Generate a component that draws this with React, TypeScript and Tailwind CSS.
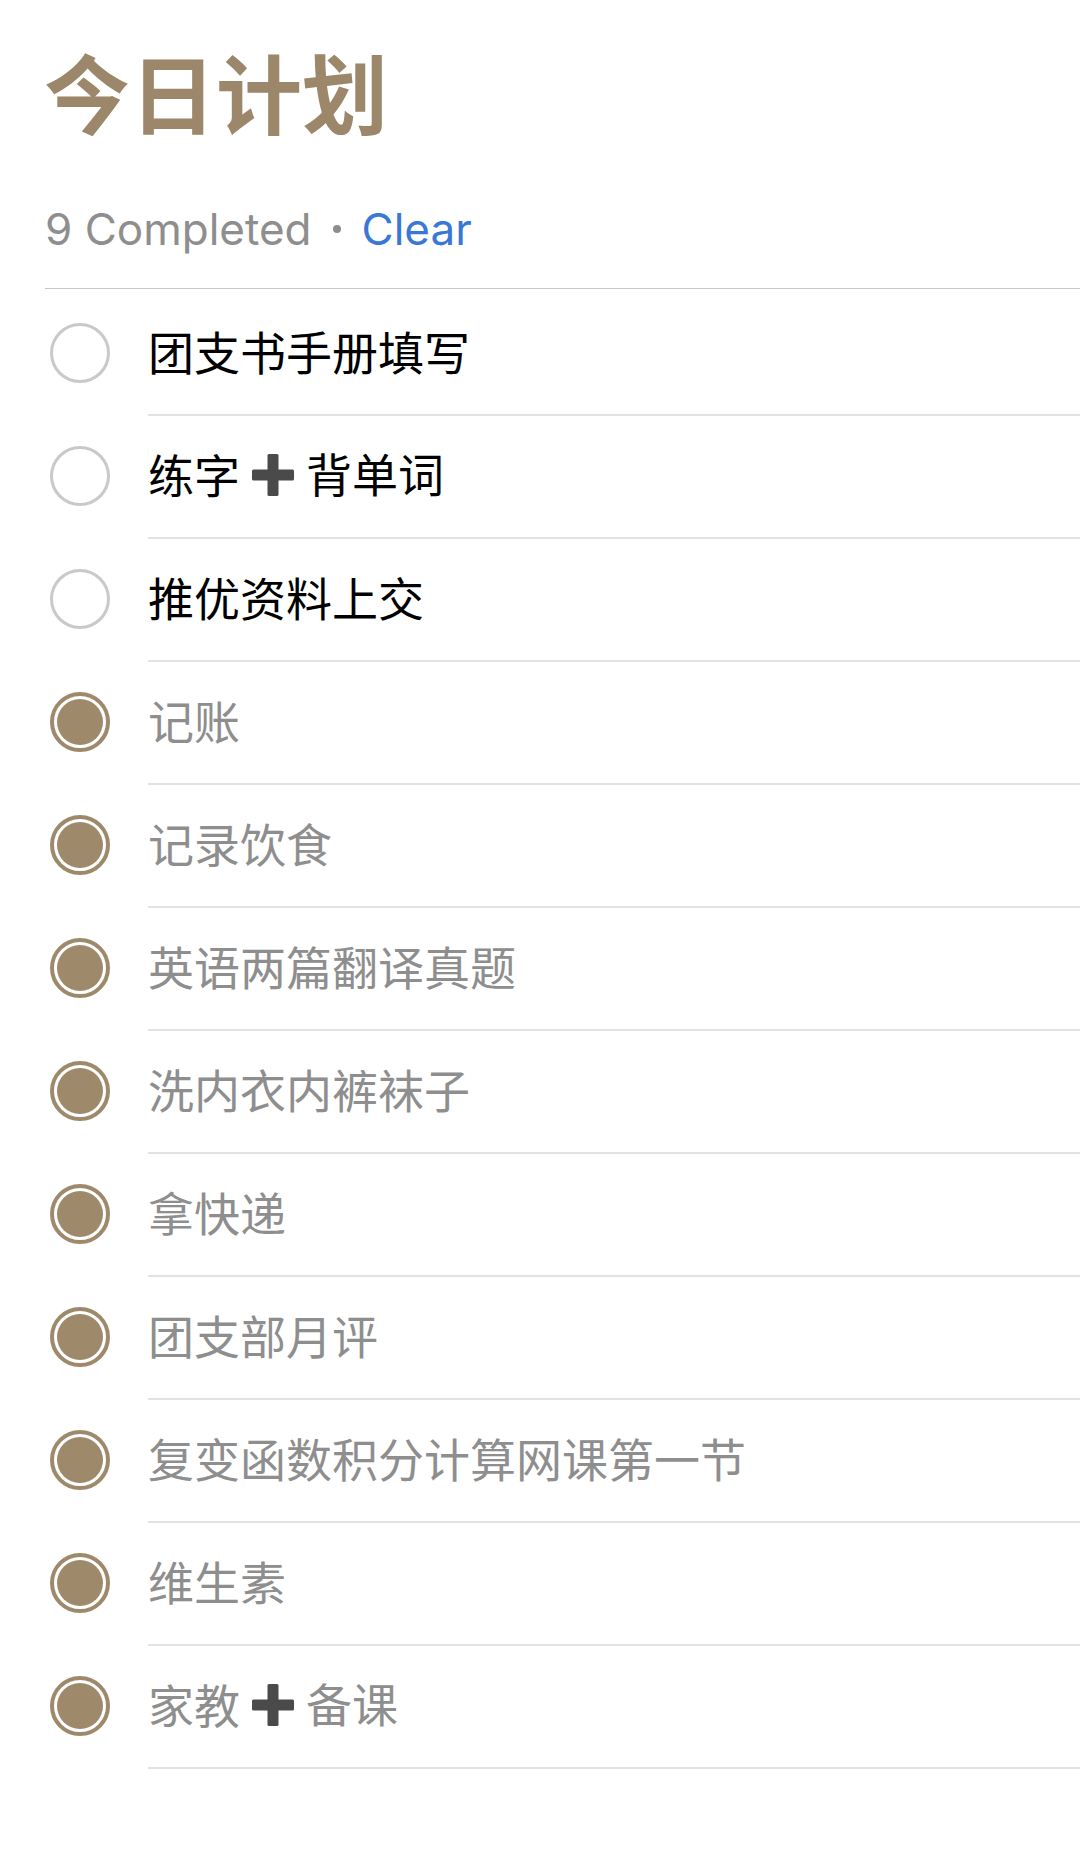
type Task = { title: string; done: boolean };

const tasks: Task[] = [
  { title: "团支书手册填写", done: false },
  { title: "练字➕背单词", done: false },
  { title: "推优资料上交", done: false },
  { title: "记账", done: true },
  { title: "记录饮食", done: true },
  { title: "英语两篇翻译真题", done: true },
  { title: "洗内衣内裤袜子", done: true },
  { title: "拿快递", done: true },
  { title: "团支部月评", done: true },
  { title: "复变函数积分计算网课第一节", done: true },
  { title: "维生素", done: true },
  { title: "家教➕备课", done: true },
];

function Plus() {
  return (
    <svg viewBox="0 0 42 42" className="inline-block w-[42px] h-[42px] mx-[12px] align-[-4px]">
      <rect x="15.5" y="0" width="11" height="42" rx="1.5" fill="#4a4a4a" />
      <rect x="0" y="15.5" width="42" height="11" rx="1.5" fill="#4a4a4a" />
    </svg>
  );
}

function Title({ text }: { text: string }) {
  const parts = text.split("➕");
  return (
    <>
      {parts.map((p, i) => (
        <span key={i}>
          {i > 0 && <Plus />}
          {p}
        </span>
      ))}
    </>
  );
}

function Check({ done }: { done: boolean }) {
  if (!done) {
    return <div className="w-[60px] h-[60px] shrink-0 mb-[4px] rounded-full border-[3px] border-[#c9c9c9]" />;
  }
  return (
    <div className="w-[60px] h-[60px] shrink-0 mb-[4px] rounded-full border-[4px] border-[#9e8a6b] p-[3px]">
      <div className="w-full h-full rounded-full bg-[#9e8a6b]" />
    </div>
  );
}

export default function App() {
  return (
    <div className="w-[1080px] h-[1850px] bg-white font-['Noto_Sans_CJK_SC',sans-serif]">
      <h1 className="pl-[44px] pt-[48px] text-[86px] font-bold leading-none text-[#9c876a]">今日计划</h1>

      <div className="pl-[45px] mt-[73px] text-[44px] leading-none font-['Inter','Noto_Sans_CJK_SC',sans-serif] text-[#8e8e8e] flex items-center">
        <span>9 Completed</span>
        <span className="mx-[21px] w-[8px] h-[8px] rounded-full bg-[#8e8e8e]" />
        <span className="text-[#3a78d6]">Clear</span>
      </div>

      <div className="ml-[45px] mt-[37px] h-px bg-[#c6c6c6]" />

      <div className="pt-[4px]">
        {tasks.map((t, i) => (
          <div key={i} className="flex items-center pl-[50px]">
            <Check done={t.done} />
            <div
              className={
                "ml-[38px] flex-1 h-[123px] pb-[8px] flex items-center border-b-2 border-[#e2e2e2] text-[46px] leading-none " +
                (t.done ? "text-[#8e8e8e]" : "text-black")
              }
            >
              <Title text={t.title} />
            </div>
          </div>
        ))}
      </div>
    </div>
  );
}
